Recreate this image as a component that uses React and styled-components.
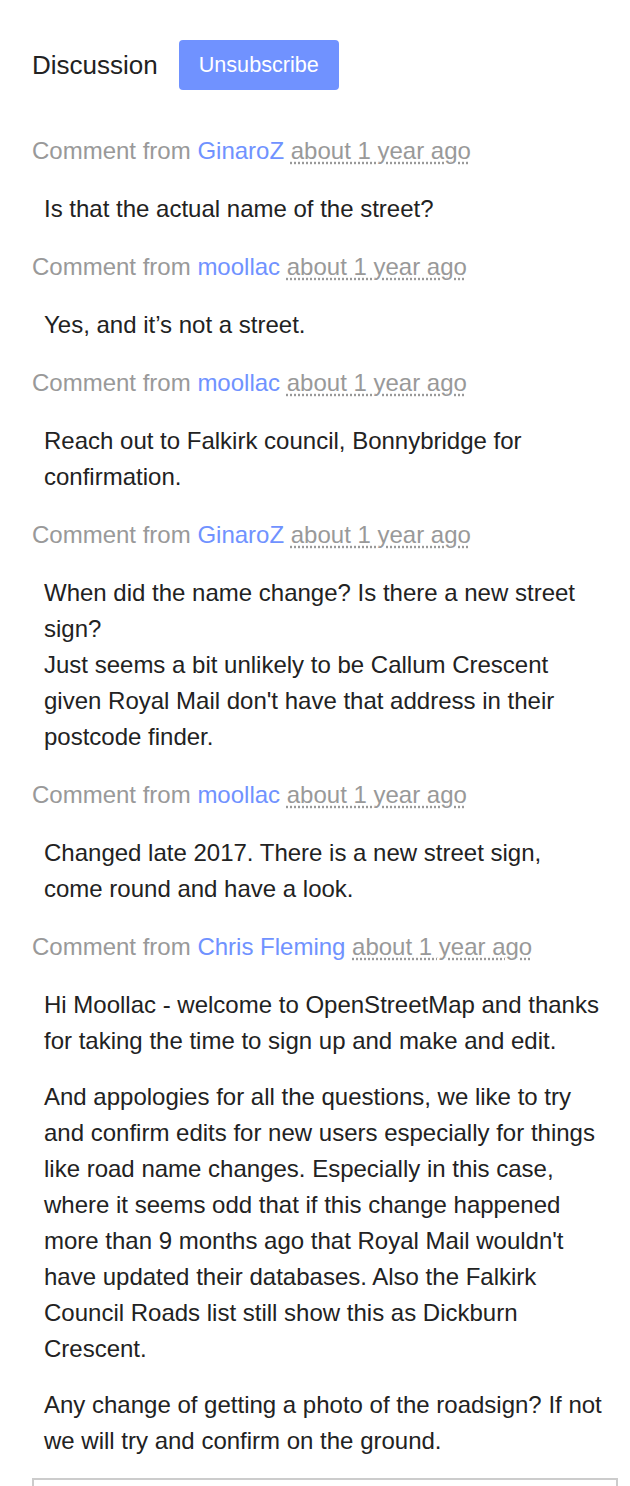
import styled, { createGlobalStyle } from "styled-components";

const GlobalStyle = createGlobalStyle`
    body {
        margin: 0;
        background: #fff;
        font-family: "Liberation Sans", Arial, sans-serif;
        color: #222;
    }
`;

const Page = styled.div`
    padding: 40px 12px 0 32px;
`;

const TitleRow = styled.div`
    display: flex;
    align-items: center;
    gap: 21px;
    margin-bottom: 43px;
`;

const Title = styled.h4`
    margin: 0;
    font-size: 26px;
    font-weight: normal;
    color: #222;
`;

const Button = styled.button`
    height: 50px;
    padding: 0 20px;
    border: none;
    border-radius: 4px;
    background: #7092ff;
    color: #fff;
    font-family: inherit;
    font-size: 21.6px;
`;

const Comments = styled.ul`
    list-style: none;
    margin: 0;
    padding: 0;
    display: flex;
    flex-direction: column;
    gap: 22px;
`;

const Comment = styled.li`
    display: flex;
    flex-direction: column;
    gap: 22px;
`;

const Meta = styled.p`
    margin: 0;
    font-size: 24px;
    line-height: 36px;
    color: #999;

    a {
        color: #7092ff;
        text-decoration: none;
    }

    abbr {
        text-decoration: underline dotted #999;
        text-underline-offset: 3px;
    }
`;

const Body = styled.div`
    padding: 0 12px;
    display: flex;
    flex-direction: column;
    gap: 20px;

    p {
        margin: 0;
        font-size: 24px;
        line-height: 36px;
        color: #222;
    }
`;

const Reply = styled.textarea`
    display: block;
    box-sizing: border-box;
    width: 100%;
    height: 120px;
    margin-top: 19px;
    border: 2px solid #ccc;
    resize: none;
`;

const comments = [
    { user: "GinaroZ", text: ["Is that the actual name of the street?"] },
    { user: "moollac", text: ["Yes, and it\u2019s not a street."] },
    { user: "moollac", text: ["Reach out to Falkirk council, Bonnybridge for confirmation."] },
    {
        user: "GinaroZ",
        text: [
            "When did the name change? Is there a new street sign?\nJust seems a bit unlikely to be Callum Crescent given Royal Mail don't have that address in their postcode finder.",
        ],
    },
    {
        user: "moollac",
        text: ["Changed late 2017. There is a new street sign, come round and have a look."],
    },
    {
        user: "Chris Fleming",
        text: [
            "Hi Moollac - welcome to OpenStreetMap and thanks for taking the time to sign up and make and edit.",
            "And appologies for all the questions, we like to try and confirm edits for new users especially for things like road name changes. Especially in this case, where it seems odd that if this change happened more than 9 months ago that Royal Mail wouldn't have updated their databases. Also the Falkirk Council Roads list still show this as Dickburn Crescent.",
            "Any change of getting a photo of the roadsign? If not we will try and confirm on the ground.",
        ],
    },
];

export default function App() {
    return (
        <Page>
            <GlobalStyle />
            <TitleRow>
                <Title>Discussion</Title>
                <Button>Unsubscribe</Button>
            </TitleRow>
            <Comments>
                {comments.map((c, i) => (
                    <Comment key={i}>
                        <Meta>
                            Comment from <a href="#">{c.user}</a>{" "}
                            <abbr title="">about 1 year ago</abbr>
                        </Meta>
                        <Body>
                            {c.text.map((t, j) => (
                                <p key={j}>
                                    {t.split("\n").map((line, k) => (
                                        <span key={k}>
                                            {k > 0 && <br />}
                                            {line}
                                        </span>
                                    ))}
                                </p>
                            ))}
                        </Body>
                    </Comment>
                ))}
            </Comments>
            <Reply />
        </Page>
    );
}
